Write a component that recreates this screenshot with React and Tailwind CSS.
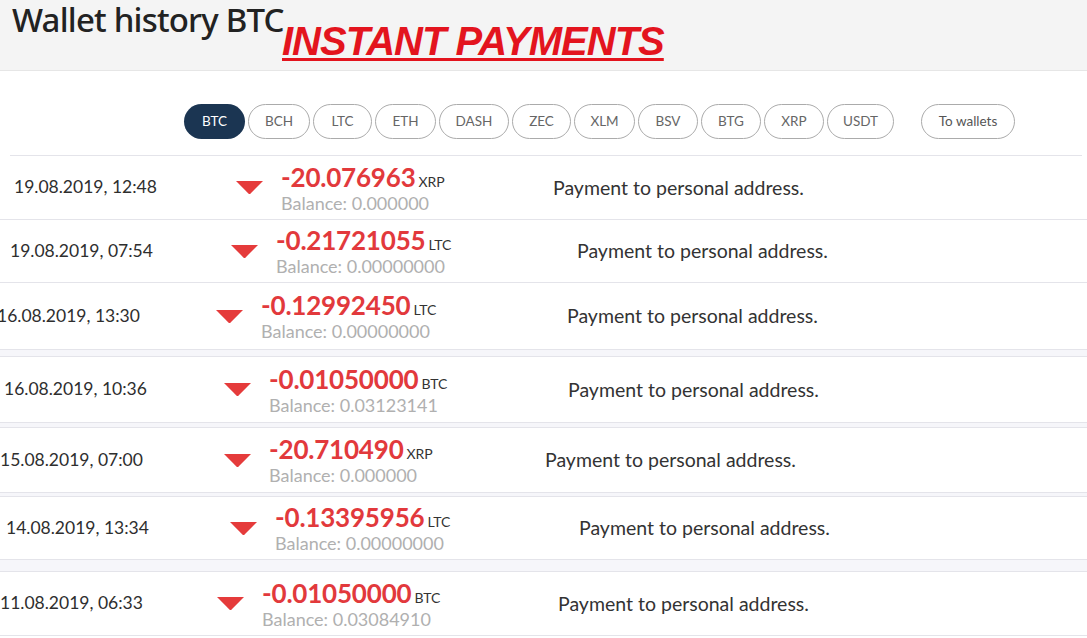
import React from 'react';

const coins = ['BTC', 'BCH', 'LTC', 'ETH', 'DASH', 'ZEC', 'XLM', 'BSV', 'BTG', 'XRP', 'USDT'];

const pillW = {
  BTC: 'w-[61px]',
  BCH: 'w-[62px]',
  LTC: 'w-[59px]',
  ETH: 'w-[61px]',
  DASH: 'w-[70px]',
  ZEC: 'w-[59px]',
  XLM: 'w-[61px]',
  BSV: 'w-[60px]',
  BTG: 'w-[60px]',
  XRP: 'w-[60px]',
  USDT: 'w-[67px]',
};

// each row was cut from a separate screenshot, so offsets drift a little
const rows = [
  { date: '19.08.2019, 12:48', amount: '-20.076963', unit: 'XRP', balance: '0.000000', h: 'h-[64px]', dateBox: 'w-[236px] pl-[14px]', mid: 'w-[317px]', after: '' },
  { date: '19.08.2019, 07:54', amount: '-0.21721055', unit: 'LTC', balance: '0.00000000', h: 'h-[63px]', dateBox: 'w-[231px] pl-[10px]', mid: 'w-[346px]', after: '' },
  { date: '16.08.2019, 13:30', amount: '-0.12992450', unit: 'LTC', balance: '0.00000000', h: 'h-[67px]', dateBox: 'w-[219px] -ml-[3px] pl-0', mid: 'w-[351px]', after: 'h-[7px]' },
  { date: '16.08.2019, 10:36', amount: '-0.01050000', unit: 'BTC', balance: '0.03123141', h: 'h-[66px]', dateBox: 'w-[224px] pl-[4px]', mid: 'w-[344px]', after: 'h-[5px]' },
  { date: '15.08.2019, 07:00', amount: '-20.710490', unit: 'XRP', balance: '0.000000', h: 'h-[65px]', dateBox: 'w-[224px] pl-0', mid: 'w-[321px]', after: 'h-[4px]' },
  { date: '14.08.2019, 13:34', amount: '-0.13395956', unit: 'LTC', balance: '0.00000000', h: 'h-[63px]', dateBox: 'w-[230px] pl-[6px]', mid: 'w-[349px]', after: 'h-[12px]' },
  { date: '11.08.2019, 06:33', amount: '-0.01050000', unit: 'BTC', balance: '0.03084910', h: 'h-[64px]', dateBox: 'w-[217px] pl-0', mid: 'w-[341px]', after: '' },
];

const Arrow = () => (
  <svg width="27" height="13" viewBox="0 0 27 13" className="shrink-0">
    <path d="M0 0 H27 L14.6 12.4 Q13.5 13.4 12.4 12.4 Z" fill="#e53b3b" />
  </svg>
);

const Row = ({ r }) => (
  <>
    <div className={`flex items-center ${r.h} border-b border-[#e4e4ea] bg-white`}>
      <div className={`${r.dateBox} shrink-0 text-[17.5px] text-[#2e2e2e]`}>{r.date}</div>
      <div className={`${r.mid} shrink-0 flex items-center`}>
        <Arrow />
        <div className="ml-[18px] flex flex-col">
          <div className="flex items-baseline leading-none">
            <span className="text-[26px] font-bold text-[#e2393c] tracking-[-0.2px]">{r.amount}</span>
            <span className="ml-[3px] text-[14px] text-[#333]">{r.unit}</span>
          </div>
          <div className="mt-[4px] text-[18px] leading-none text-[#b0b0b0]">Balance: {r.balance}</div>
        </div>
      </div>
      <div className="text-[19.5px] text-[#333]">Payment to personal address.</div>
    </div>
    {r.after && <div className={`${r.after} bg-[#f6f6fa] border-b border-[#e4e4ea]`} />}
  </>
);

export default function App() {
  return (
    <div className="w-[1087px] h-[638px] overflow-hidden bg-white font-['Lato',sans-serif]">
      <div className="relative h-[71px] bg-[#f4f4f4] border-b border-[#e6e6e6]">
        <h1 className="pl-[12px] pt-0 text-[33px] leading-[40px] font-medium text-[#222] tracking-[-0.8px] font-['Noto_Sans',sans-serif]">
          Wallet history BTC
        </h1>
        <div className="absolute left-[282px] top-[20px] text-[40px] leading-[42px] font-bold italic text-[#e3141e] underline decoration-[3px] underline-offset-[3px] font-['Liberation_Sans',sans-serif] tracking-[-1px]">
          INSTANT PAYMENTS
        </div>
      </div>

      <div className="flex items-center pl-[184px] pt-[33px]">
        <div className="flex gap-[3px]">
          {coins.map((c) => (
            <div
              key={c}
              className={`${pillW[c]} h-[35px] rounded-full flex items-center justify-center text-[13.5px] ${
                c === 'BTC' ? 'bg-[#1b3552] text-white' : 'border border-[#ababab] text-[#666]'
              }`}
            >
              {c}
            </div>
          ))}
        </div>
        <div className="ml-[27px] w-[94px] h-[35px] rounded-full border border-[#ababab] flex items-center justify-center text-[13.5px] text-[#555]">
          To wallets
        </div>
      </div>

      <div className="mt-[16px] ml-[10px] mr-[5px] border-b border-[#e4e4ea]" />
      <div>
        {rows.map((r, i) => (
          <Row key={i} r={r} />
        ))}
      </div>
    </div>
  );
}
